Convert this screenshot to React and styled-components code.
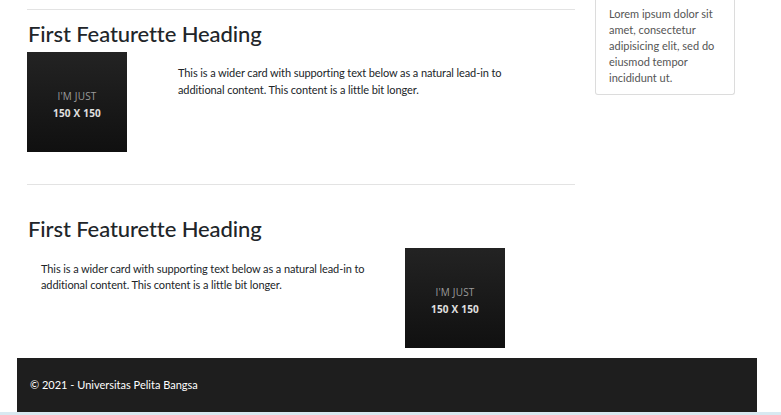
import React from 'react'
import styled, { createGlobalStyle } from 'styled-components'

const GlobalStyle = createGlobalStyle`
  html, body {
    margin: 0;
    padding: 0;
    background: #d8e9f1;
  }
  body {
    font-family: Lato, "Open Sans", sans-serif;
    font-variant-ligatures: none;
    color: #212529;
  }
  *, *::before, *::after {
    box-sizing: border-box;
  }
`

const Page = styled.div`
  background: #fff;
  height: 412px;
  overflow: hidden;
  display: flex;
  flex-direction: column;
`

const Content = styled.div`
  display: flex;
  gap: 20px;
  padding: 0 0 0 27px;
  flex: 1;
  min-height: 0;
  overflow: hidden;
`

const Main = styled.main`
  width: 548px;
`

const Divider = styled.hr`
  border: 0;
  border-top: 1px solid #e3e3e3;
  margin: ${(p) => p.$top}px 0 0;
`

const Heading = styled.h2`
  font-size: 22px;
  font-weight: 500;
  line-height: 1.2;
  margin: ${(p) => p.$top}px 0 5px 1px;
  color: #212529;
  letter-spacing: -0.1px;
`

const Featurette = styled.div`
  display: grid;
  grid-template-columns: ${(p) => p.$cols};
  align-items: start;
`

const Text = styled.p`
  font-size: 11px;
  line-height: 1.5;
  letter-spacing: -0.1px;
  margin: ${(p) => p.$top}px 0 0 ${(p) => p.$left}px;
`

const Placeholder = styled.div`
  width: 100px;
  height: 100px;
  background: linear-gradient(#232323, #101010);
  display: flex;
  flex-direction: column;
  align-items: center;
  justify-content: center;
  padding-top: 6px;
  font-family: "Open Sans", sans-serif;
  font-size: 10px;
  line-height: 17px;
  letter-spacing: 0.2px;
`

const PhLight = styled.span`
  color: #9a9a9a;
`

const PhBold = styled.span`
  color: #e0e0e0;
  font-weight: 700;
`

const Sidebar = styled.aside`
  width: 140px;
`

const Card = styled.div`
  border: 1px solid #dcdcdc;
  border-top: 0;
  border-radius: 0 0 3px 3px;
  padding: 6px 10px 8px 13px;
  font-size: 11px;
  line-height: 16px;
  color: #555;
`

const Footer = styled.footer`
  flex-shrink: 0;
  background: #1e1e1e;
  margin: 0 24px 0 17px;
  height: 54px;
  display: flex;
  align-items: center;
  padding: 0 13px 2px;
  font-size: 11px;
  color: #fff;
`

const ImageBlock = () => (
  <Placeholder>
    <PhLight>I'M JUST</PhLight>
    <PhBold>150 X 150</PhBold>
  </Placeholder>
)

const copy =
  'This is a wider card with supporting text below as a natural lead-in to additional content. This content is a little bit longer.'

export default function App() {
  return (
    <Page>
      <GlobalStyle />
      <Content>
        <Main>
          <Divider $top={9} />
          <Heading $top={11}>First Featurette Heading</Heading>
          <Featurette $cols="151px 340px">
            <ImageBlock />
            <Text $top={13} $left={0}>{copy}</Text>
          </Featurette>
          <Divider $top={32} />
          <Heading $top={31}>First Featurette Heading</Heading>
          <Featurette $cols="378px 100px">
            <Text $top={13} $left={14}>{copy}</Text>
            <ImageBlock />
          </Featurette>
        </Main>
        <Sidebar>
          <Card>Lorem ipsum dolor sit amet, consectetur adipisicing elit, sed do eiusmod tempor incididunt ut.</Card>
        </Sidebar>
      </Content>
      <Footer>© 2021 - Universitas Pelita Bangsa</Footer>
    </Page>
  )
}
